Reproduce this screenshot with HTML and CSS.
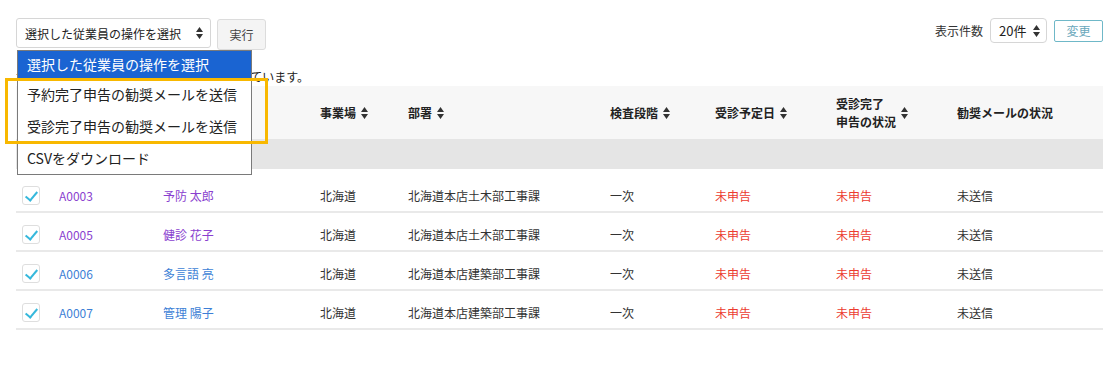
FILE: index.html
```html
<!DOCTYPE html>
<html>

<head>
  <meta charset="UTF-8" />
  <link rel="stylesheet" href="styles.css">
</head>

<body>
  <div class="page">
    <!-- 上部の操作バー -->
    <div class="toolbar">
      <div class="bulk">
        <div class="select op-select">
          <span>選択した従業員の操作を選択</span>
          <svg class="updown" width="7" height="12" viewBox="0 0 7 12"><path d="M3.5 0L7 5H0z M3.5 12L0 7h7z" fill="#333"/></svg>
        </div>
        <button class="btn run-btn">実行</button>

        <!-- 開いたプルダウン -->
        <ul class="dropdown">
          <li class="selected">選択した従業員の操作を選択</li>
          <li>予約完了申告の勧奨メールを送信</li>
          <li>受診完了申告の勧奨メールを送信</li>
          <li>CSVをダウンロード</li>
        </ul>
        <div class="highlight"></div>
      </div>

      <div class="per-page">
        <span class="label">表示件数</span>
        <div class="select count-select">
          <span>20件</span>
          <svg class="updown" width="7" height="12" viewBox="0 0 7 12"><path d="M3.5 0L7 5H0z M3.5 12L0 7h7z" fill="#333"/></svg>
        </div>
        <button class="btn change-btn">変更</button>
      </div>
    </div>

    <p class="notice">検索結果のうち、計4名の従業員が選択されています。</p>

    <table class="list">
      <colgroup>
        <col style="width:43px">
        <col style="width:104px">
        <col style="width:157px">
        <col style="width:88px">
        <col style="width:202px">
        <col style="width:105px">
        <col style="width:121px">
        <col style="width:121px">
        <col>
      </colgroup>
      <thead>
        <tr class="head">
          <th></th>
          <th></th>
          <th></th>
          <th><span class="sort">事業場<svg class="arr" width="7" height="12" viewBox="0 0 7 12"><path d="M3.5 0L7 5H0z M3.5 12L0 7h7z"/></svg></span></th>
          <th><span class="sort">部署<svg class="arr" width="7" height="12" viewBox="0 0 7 12"><path d="M3.5 0L7 5H0z M3.5 12L0 7h7z"/></svg></span></th>
          <th><span class="sort">検査段階<svg class="arr" width="7" height="12" viewBox="0 0 7 12"><path d="M3.5 0L7 5H0z M3.5 12L0 7h7z"/></svg></span></th>
          <th><span class="sort">受診予定日<svg class="arr" width="7" height="12" viewBox="0 0 7 12"><path d="M3.5 0L7 5H0z M3.5 12L0 7h7z"/></svg></span></th>
          <th><span class="sort">受診完了<br>申告の状況<svg class="arr" width="7" height="12" viewBox="0 0 7 12"><path d="M3.5 0L7 5H0z M3.5 12L0 7h7z"/></svg></span></th>
          <th>勧奨メールの状況</th>
        </tr>
        <tr class="band">
          <td colspan="9"></td>
        </tr>
      </thead>
      <tbody>
        <tr>
          <td><span class="check"></span></td>
          <td><a class="visited" href="#">A0003</a></td>
          <td><a class="visited" href="#">予防 太郎</a></td>
          <td>北海道</td>
          <td>北海道本店土木部工事課</td>
          <td>一次</td>
          <td class="red">未申告</td>
          <td class="red">未申告</td>
          <td>未送信</td>
        </tr>
        <tr>
          <td><span class="check"></span></td>
          <td><a class="visited" href="#">A0005</a></td>
          <td><a class="visited" href="#">健診 花子</a></td>
          <td>北海道</td>
          <td>北海道本店土木部工事課</td>
          <td>一次</td>
          <td class="red">未申告</td>
          <td class="red">未申告</td>
          <td>未送信</td>
        </tr>
        <tr>
          <td><span class="check"></span></td>
          <td><a href="#">A0006</a></td>
          <td><a href="#">多言語 亮</a></td>
          <td>北海道</td>
          <td>北海道本店建築部工事課</td>
          <td>一次</td>
          <td class="red">未申告</td>
          <td class="red">未申告</td>
          <td>未送信</td>
        </tr>
        <tr>
          <td><span class="check"></span></td>
          <td><a href="#">A0007</a></td>
          <td><a href="#">管理 陽子</a></td>
          <td>北海道</td>
          <td>北海道本店建築部工事課</td>
          <td>一次</td>
          <td class="red">未申告</td>
          <td class="red">未申告</td>
          <td>未送信</td>
        </tr>
      </tbody>
    </table>
  </div>
</body>

</html>
```

FILE: styles.css
```css
body {
  margin: 0;
  font-family: "Noto Sans CJK JP", "Noto Sans", sans-serif;
  font-size: 12px;
  color: #333;
  background: #fff;
}

.page {
  padding: 18px 12px 0 16px;
}

/* 操作バー */
.toolbar {
  display: flex;
  justify-content: space-between;
  align-items: flex-start;
}

.bulk {
  position: relative;
  display: flex;
  align-items: flex-start;
  gap: 6px;
}

.select {
  box-sizing: border-box;
  display: flex;
  align-items: center;
  justify-content: space-between;
  background: #fff;
  border: 1px solid #d6d6d6;
  border-radius: 3px;
  color: #222;
}

.op-select {
  width: 195px;
  height: 30px;
  padding: 0 7px 0 8px;
  font-size: 12px;
}

.btn {
  box-sizing: border-box;
  font-family: inherit;
  cursor: pointer;
}

.run-btn {
  width: 49px;
  height: 31px;
  margin-top: 1px;
  background: #f4f4f4;
  border: 1px solid #dcdcdc;
  border-radius: 3px;
  font-size: 12px;
  color: #444;
}

.dropdown {
  position: absolute;
  top: 32px;
  left: 1px;
  z-index: 5;
  width: 235px;
  margin: 0;
  padding: 0;
  list-style-type: none;
  background: #fff;
  border: 1px solid #7a7a7a;
  box-sizing: border-box;
  font-size: 14px;
  color: #222;
  white-space: nowrap;
}

.dropdown li {
  height: 32px;
  line-height: 32px;
  padding-left: 9px;
}

.dropdown li.selected {
  height: 27px;
  line-height: 27px;
  background: #1a64d2;
  color: #fff;
}

.highlight {
  position: absolute;
  top: 60px;
  left: -11px;
  z-index: 6;
  width: 263px;
  height: 66px;
  box-sizing: border-box;
  border: 3px solid #f8b800;
}

/* 表示件数 */
.per-page {
  display: flex;
  align-items: center;
  gap: 7px;
}

.per-page .label {
  font-size: 12px;
  color: #333;
}

.count-select {
  width: 57px;
  height: 25px;
  padding: 0 6px 0 8px;
  font-size: 13px;
  border-radius: 4px;
}

.change-btn {
  width: 49px;
  height: 22px;
  background: #fff;
  border: 1px solid #6fb8c8;
  border-radius: 2px;
  font-size: 12px;
  color: #6aa8bc;
  padding: 0;
}

.notice {
  margin: 17px 0 0 0;
  height: 19px;
  line-height: 19px;
  font-size: 12px;
  color: #222;
}

/* 一覧 */
.list {
  width: 100%;
  table-layout: fixed;
  border-collapse: collapse;
}

.list th {
  height: 53px;
  padding: 0;
  background: #f7f7f7;
  text-align: left;
  font-weight: bold;
  font-size: 12px;
  color: #222;
  line-height: 18px;
}

.list .band td {
  height: 30px;
  padding: 0;
  background: #e5e5e5;
  border-bottom: 5px solid #fff;
}

.list tbody td {
  height: 31px;
  padding: 6px 0 0 0;
  border-top: 2px solid #e9e9e9;
  font-size: 12px;
  color: #333;
}

.list tbody tr:last-child td {
  border-bottom: 2px solid #e9e9e9;
}

.list tbody td:first-child {
  padding-left: 6px;
}

.list tbody td.red {
  color: #ec3b2f;
}

.sort {
  display: inline-flex;
  align-items: center;
  gap: 5px;
}

.arr {
  fill: #333;
  flex: none;
}

.check {
  display: block;
  width: 18px;
  height: 19px;
  box-sizing: border-box;
  border: 1px solid #dedede;
  border-radius: 3px;
  background: #fff;
  position: relative;
}

.check::after {
  content: "";
  position: absolute;
  left: 5px;
  top: 2px;
  width: 5px;
  height: 10px;
  border-right: 2px solid #35b8dc;
  border-bottom: 2px solid #35b8dc;
  transform: rotate(40deg);
}

.list a {
  color: #3d7fd6;
  text-decoration: none;
}

.list a.visited {
  color: #8a3fcf;
}
```
